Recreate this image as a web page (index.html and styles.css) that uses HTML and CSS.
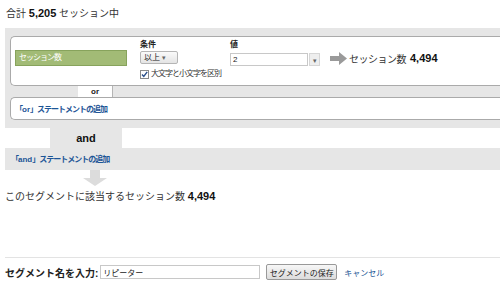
FILE: index.html
```html
<!DOCTYPE html>
<html lang="ja">
<head>
    <meta charset="UTF-8">
    <title>セグメントの作成</title>
    <link rel="stylesheet" href="styles.css">
</head>
<body>

    <p class="total">合計 <b>5,205</b> セッション中</p>

    <div class="segment">
        <div class="or-group">
            <div class="rule rule-main">
                <div class="dimension">セッション数</div>
                <div class="field cond">
                    <span class="field-label">条件</span>
                    <span class="select-btn">以上 <span class="caret">▾</span></span>
                    <label class="check">
                        <svg class="checkbox" width="9" height="9" viewBox="0 0 9 9">
                            <rect x="0.5" y="0.5" width="8" height="8" fill="#fff" stroke="#8a8a8a"/>
                            <path d="M2 4.5 L3.8 6.5 L7.2 1.8" fill="none" stroke="#2a4f8a" stroke-width="1.4"/>
                        </svg>
                        大文字と小文字を区別
                    </label>
                </div>
                <div class="field value">
                    <span class="field-label">値</span>
                    <div class="combo">
                        <input type="text" class="combo-input" value="2">
                        <span class="combo-btn"><span class="caret">▾</span></span>
                    </div>
                </div>
                <div class="result">
                    <svg class="arrow" width="17" height="13" viewBox="0 0 17 13">
                        <path d="M0 4 H9 V0 L17 6.5 L9 13 V9 H0 Z" fill="#9a9a9a"/>
                    </svg>
                    セッション数 <b>4,494</b>
                </div>
            </div>
            <div class="or-row">
                <span class="or-gap"></span>
                <span class="or-tab">or</span>
                <span class="or-rest"></span>
            </div>
            <div class="rule add-or">
                <a href="#" class="add-link">「<span class="latin">or</span>」ステートメントの追加</a>
            </div>
        </div>

        <div class="and-row"><span class="and-tab">and</span></div>
        <div class="and-band">
            <a href="#" class="add-link">「<span class="latin">and</span>」ステートメントの追加</a>
        </div>
        <div class="down-arrow">
            <svg width="24" height="16" viewBox="0 0 24 16">
                <path d="M7 0 H17 V8 H24 L12 16 L0 8 H7 Z" fill="#dcdcdc"/>
            </svg>
        </div>
    </div>

    <p class="matches">このセグメントに該当するセッション数 <b>4,494</b></p>

    <div class="save-row">
        <span class="save-label">セグメント名を入力:</span>
        <input type="text" class="name-input" value="リピーター">
        <button class="save-btn">セグメントの保存</button>
        <a href="#" class="cancel">キャンセル</a>
    </div>

</body>
</html>
```

FILE: styles.css
```css
body {
    margin: 0;
    font-family: "Liberation Sans", Arial, "Noto Sans CJK JP", sans-serif;
    font-size: 10px;
    color: #333;
    background: #fff;
}
b {
    font-size: 11px;
    color: #111;
    letter-spacing: 0;
}
.total {
    margin: 0;
    padding: 5px 6px 0;
    height: 23px;
    line-height: 16px;
}
.segment {
    margin-left: 5px;
}
.or-group {
    background: #e6e6e6;
    padding: 8px 0 8px 5px;
}
.rule {
    background: #fff;
    border: 1px solid #aaa;
    border-right: none;
    border-radius: 5px 0 0 5px;
}
.rule-main {
    height: 48px;
    display: flex;
    align-items: flex-start;
}
.dimension {
    margin: 13px 0 0 4px;
    width: 107px;
    height: 14px;
    padding-left: 3px;
    background: #a2bb76;
    border: 1px solid #87a35c;
    color: #fff;
    font-size: 8px;
    line-height: 14px;
    letter-spacing: -1px;
}
.field {
    display: flex;
    flex-direction: column;
    align-items: flex-start;
    padding-top: 3px;
}
.field-label {
    font-size: 8px;
    font-weight: bold;
    line-height: 10px;
    color: #222;
}
.cond {
    margin-left: 13px;
    width: 90px;
}
.select-btn {
    margin-top: 1px;
    height: 11px;
    width: 33px;
    padding-left: 3px;
    border: 1px solid #b5b5b5;
    border-radius: 2px;
    background: linear-gradient(#fafafa, #e4e4e4);
    font-size: 8px;
    line-height: 11px;
    color: #222;
}
.caret {
    font-size: 7px;
    color: #666;
}
.check {
    display: flex;
    align-items: center;
    gap: 2px;
    margin-top: 5px;
    font-size: 8px;
    line-height: 10px;
    color: #333;
    white-space: nowrap;
    letter-spacing: -1px;
}
.combo {
    display: flex;
    margin-top: 3px;
}
.combo-input {
    box-sizing: border-box;
    width: 78px;
    height: 13px;
    margin: 0;
    padding: 0 2px;
    border: 1px solid #c8c8c8;
    font-family: inherit;
    font-size: 8px;
    color: #222;
}
.combo-btn {
    box-sizing: border-box;
    width: 11px;
    height: 13px;
    margin-left: 1px;
    background: #eee;
    border: 1px solid #d6d6d6;
    text-align: center;
    line-height: 11px;
}
.result {
    display: flex;
    align-items: center;
    gap: 2px;
    margin: 14px 0 0 10px;
    height: 14px;
    white-space: nowrap;
    letter-spacing: -0.5px;
}
.result b {
    margin-left: 2px;
}
.or-row {
    display: flex;
    height: 11px;
}
.or-gap {
    width: 68px;
}
.or-tab {
    width: 34px;
    background: #fff;
    text-align: center;
    font-size: 8px;
    font-weight: bold;
    line-height: 11px;
    color: #222;
}
.or-rest {
    flex: 1;
    border-left: 1px solid #b5b5b5;
}
.add-or {
    height: 21px;
    line-height: 21px;
    padding-left: 4px;
}
.add-link {
    font-size: 8px;
    font-weight: bold;
    color: #1d5596;
    text-decoration: none;
    letter-spacing: -1px;
}
.latin {
    letter-spacing: 0;
}
.and-row {
    height: 20px;
}
.and-tab {
    display: inline-block;
    margin-left: 45px;
    width: 72px;
    height: 20px;
    background: #e6e6e6;
    text-align: center;
    font-size: 11px;
    font-weight: bold;
    line-height: 20px;
    color: #111;
}
.and-band {
    height: 22px;
    line-height: 22px;
    padding-left: 6px;
    background: #e6e6e6;
}
.down-arrow {
    height: 16px;
    padding-left: 78px;
}
.down-arrow svg {
    display: block;
}
.matches {
    margin: 2px 0 0 5px;
    line-height: 16px;
}
.save-row {
    display: flex;
    align-items: center;
    margin: 52px 0 0 5px;
    padding-top: 6px;
    border-top: 1px solid #e3e3e3;
    height: 16px;
}
.save-label {
    font-weight: bold;
    color: #222;
}
.name-input {
    box-sizing: border-box;
    width: 160px;
    height: 14px;
    margin: 0 0 0 2px;
    padding: 0 2px;
    border: 1px solid #c8c8c8;
    font-family: inherit;
    font-size: 8px;
    color: #222;
}
.save-btn {
    box-sizing: border-box;
    width: 71px;
    height: 16px;
    margin-left: 6px;
    padding: 0;
    border: 1px solid #999;
    border-radius: 2px;
    background: linear-gradient(#f7f7f7, #dcdcdc);
    font-family: inherit;
    font-size: 8px;
    color: #222;
}
.cancel {
    margin-left: 7px;
    font-size: 8px;
    color: #1d5596;
    text-decoration: none;
}
```
